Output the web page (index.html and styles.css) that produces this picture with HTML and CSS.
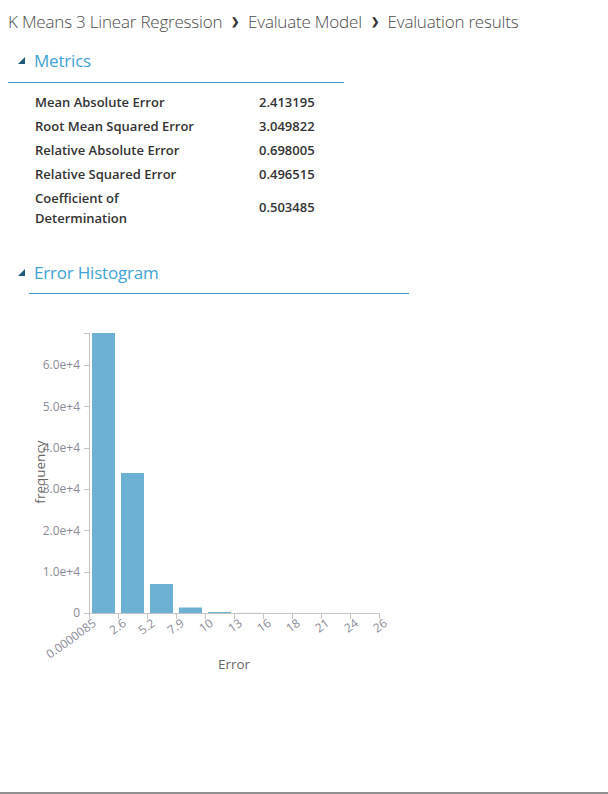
FILE: index.html
```html
<!DOCTYPE html>
<html>
<head>
<meta charset="utf-8">
<link rel="stylesheet" href="styles.css">
</head>
<body>
<div class="crumbs">
  <span>K Means 3 Linear Regression</span>
  <span class="sep">&#x276F;</span>
  <span>Evaluate Model</span>
  <span class="sep">&#x276F;</span>
  <span>Evaluation results</span>
</div>

<section class="sec metrics">
  <div class="sec-head">
    <svg class="tri" width="7" height="7" viewBox="0 0 7 7"><polygon points="7,0 7,7 0,7" fill="#1d5c7c"/></svg>
    <span class="sec-title">Metrics</span>
  </div>
  <div class="sec-rule"></div>
  <div class="mtable">
    <div class="lab">Mean Absolute Error</div><div class="val">2.413195</div>
    <div class="lab">Root Mean Squared Error</div><div class="val">3.049822</div>
    <div class="lab">Relative Absolute Error</div><div class="val">0.698005</div>
    <div class="lab">Relative Squared Error</div><div class="val">0.496515</div>
    <div class="lab two">Coefficient of Determination</div><div class="val">0.503485</div>
  </div>
</section>

<section class="sec hist">
  <div class="sec-head">
    <svg class="tri" width="7" height="7" viewBox="0 0 7 7"><polygon points="7,0 7,7 0,7" fill="#1d5c7c"/></svg>
    <span class="sec-title">Error Histogram</span>
  </div>
  <div class="sec-rule wide"></div>
  <svg class="chart" width="420" height="390" viewBox="0 300 420 390">
    <g class="bars" fill="#6cb0d3">
      <rect x="92" y="332" width="23" height="280"/>
      <rect x="121" y="472" width="23" height="140"/>
      <rect x="150" y="583" width="23" height="29"/>
      <rect x="179" y="606.5" width="23" height="5.5"/>
      <rect x="208" y="611" width="23" height="1"/>
      <rect x="237" y="611.6" width="23" height="0.4" fill="#d8e8f1"/>
    </g>
    <g class="axis" stroke="#c4c4c4" fill="none" shape-rendering="crispEdges">
      <path d="M83.5,332.5 H89.5 V612.5"/>
      <path d="M83.5,612.5 H89.5"/>
      <path d="M83.5,571.2 H89.5 M83.5,529.8 H89.5 M83.5,488.5 H89.5 M83.5,447.2 H89.5 M83.5,405.8 H89.5 M83.5,364.5 H89.5"/>
      <path d="M89.5,612.5 H379.5"/>
      <path d="M89.5,612.5 V618 M118.5,612.5 V618 M147.5,612.5 V618 M176.5,612.5 V618 M205.5,612.5 V618 M234.5,612.5 V618 M263.5,612.5 V618 M292.5,612.5 V618 M321.5,612.5 V618 M350.5,612.5 V618 M379.5,612.5 V618"/>
    </g>
    <g class="ylab" text-anchor="end">
      <text x="80" y="616">0</text>
      <text x="80" y="575">1.0e+4</text>
      <text x="80" y="533.5">2.0e+4</text>
      <text x="80" y="492">3.0e+4</text>
      <text x="80" y="451">4.0e+4</text>
      <text x="80" y="409.5">5.0e+4</text>
      <text x="80" y="368">6.0e+4</text>
    </g>
    <g class="xlab" text-anchor="end">
      <text transform="translate(97,624) rotate(-36)">0.0000085</text>
      <text transform="translate(127,624) rotate(-36)">2.6</text>
      <text transform="translate(156,624) rotate(-36)">5.2</text>
      <text transform="translate(185,624) rotate(-36)">7.9</text>
      <text transform="translate(214,624) rotate(-36)">10</text>
      <text transform="translate(243,624) rotate(-36)">13</text>
      <text transform="translate(272,624) rotate(-36)">16</text>
      <text transform="translate(301,624) rotate(-36)">18</text>
      <text transform="translate(330,624) rotate(-36)">21</text>
      <text transform="translate(359,624) rotate(-36)">24</text>
      <text transform="translate(388,624) rotate(-36)">26</text>
    </g>
    <text class="atitle" x="234" y="668" text-anchor="middle">Error</text>
    <text class="atitle" transform="translate(45,471) rotate(-90)" text-anchor="middle">frequency</text>
  </svg>
</section>

<div class="bottom-strip"></div>
</body>
</html>
```

FILE: styles.css
```css
html, body {
  margin: 0;
  padding: 0;
  background: #fff;
}
body {
  font-family: "Open Sans", "Noto Sans", sans-serif;
  color: #333;
}
.crumbs {
  display: flex;
  align-items: center;
  gap: 8px;
  padding: 9px 0 0 8px;
  height: 24px;
  font-size: 17px;
  font-weight: 300;
  color: #4a4a4a;
  letter-spacing: -0.2px;
}
.crumbs .sep {
  font-size: 10px;
  font-weight: 700;
  color: #333;
  padding: 0 1px;
}
.sec-head {
  display: flex;
  align-items: center;
  height: 24px;
  padding-left: 18px;
}
.metrics .sec-head {
  margin-top: 15px;
}
.tri {
  display: block;
  width: 7px;
  height: 7px;
  margin-right: 9px;
  margin-top: 1px;
}
.sec-title {
  font-size: 17px;
  color: #3ea3d6;
  letter-spacing: -0.2px;
}
.sec-rule {
  height: 1px;
  background: #3a9dc8;
  margin: 10px 0 0 8px;
  width: 336px;
}
.sec-rule.wide {
  margin-left: 29px;
  margin-top: 9px;
  width: 380px;
}
.mtable {
  display: grid;
  grid-template-columns: 172px auto;
  column-gap: 52px;
  padding: 7px 0 0 35px;
  font-size: 13px;
  font-weight: 600;
  color: #333;
  align-items: center;
}
.mtable .lab, .mtable .val {
  line-height: 24px;
}
.mtable .lab.two {
  line-height: 20px;
  padding-top: 2px;
}
.hist .sec-head {
  margin-top: 32px;
}
.chart {
  display: block;
  margin-top: 7px;
  font-family: "Open Sans", "Noto Sans", sans-serif;
}
.ylab text, .xlab text {
  font-size: 12px;
  fill: #8a8a96;
}
.atitle {
  font-size: 13.5px;
  fill: #666;
}
.bottom-strip {
  position: fixed;
  left: 0;
  right: 0;
  bottom: 0;
  height: 2px;
  background: #909090;
}
```
